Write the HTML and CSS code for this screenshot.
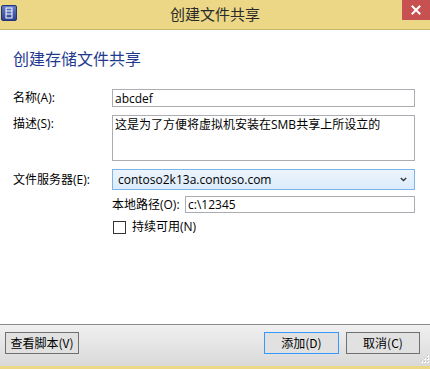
FILE: index.html
```html
<!DOCTYPE html>
<html lang="zh-CN">
<head>
<meta charset="utf-8">
<title>创建文件共享</title>
<link rel="stylesheet" href="styles.css">
</head>
<body>
<div class="window">
  <div class="titlebar">
    <div class="app-icon">
      <svg width="16" height="16" viewBox="0 0 16 16">
        <defs>
          <linearGradient id="ig" x1="0" y1="0" x2="0" y2="1">
            <stop offset="0" stop-color="#6a7fc8"/>
            <stop offset="1" stop-color="#2a3f8f"/>
          </linearGradient>
        </defs>
        <rect x="0.5" y="0.5" width="15" height="15" rx="1.5" fill="url(#ig)" stroke="#24357a"/>
        <rect x="5" y="3" width="6" height="10" fill="none" stroke="#fff" stroke-width="1"/>
        <line x1="5" y1="6" x2="11" y2="6" stroke="#fff"/>
        <line x1="5" y1="9" x2="11" y2="9" stroke="#fff"/>
      </svg>
    </div>
    <div class="title">创建文件共享</div>
    <div class="close">
      <svg width="10" height="10" viewBox="0 0 10 10">
        <path d="M1.5 1.5 L8.5 8.5 M8.5 1.5 L1.5 8.5" stroke="#fff" stroke-width="2" stroke-linecap="square"/>
      </svg>
    </div>
  </div>

  <div class="content">
    <h1 class="heading">创建存储文件共享</h1>
    <div class="form">
      <label class="label row-name">名称(A):</label>
      <input class="field input" value="abcdef">

      <label class="label row-desc">描述(S):</label>
      <div class="field textarea">这是为了方便将虚拟机安装在SMB共享上所设立的</div>

      <label class="label row-server">文件服务器(E):</label>
      <div class="field combo">
        <span>contoso2k13a.contoso.com</span>
        <svg class="chev" width="7" height="5" viewBox="0 0 7 5">
          <path d="M0.8 1 L3.5 3.6 L6.2 1" fill="none" stroke="#333" stroke-width="1.4"/>
        </svg>
      </div>

      <div class="spacer"></div>
      <div class="subrow">
        <label class="sublabel">本地路径(O):</label>
        <input class="field input path" value="c:\12345">
      </div>

      <div class="spacer"></div>
      <div class="check-row">
        <span class="checkbox"></span>
        <span class="check-label">持续可用(N)</span>
      </div>
    </div>
  </div>

  <div class="footer">
    <button class="btn">查看脚本(V)</button>
    <div class="footer-right">
      <button class="btn default">添加(D)</button>
      <button class="btn">取消(C)</button>
    </div>
    <svg class="grip" width="10" height="10" viewBox="0 0 10 10">
      <g fill="#ffffff">
        <rect x="8" y="0" width="2" height="2"/>
        <rect x="5" y="3" width="2" height="2"/><rect x="8" y="3" width="2" height="2"/>
        <rect x="2" y="6" width="2" height="2"/><rect x="5" y="6" width="2" height="2"/><rect x="8" y="6" width="2" height="2"/>
      </g>
      <g fill="#b8b8b8">
        <rect x="8" y="0" width="1" height="1"/>
        <rect x="5" y="3" width="1" height="1"/><rect x="8" y="3" width="1" height="1"/>
        <rect x="2" y="6" width="1" height="1"/><rect x="5" y="6" width="1" height="1"/><rect x="8" y="6" width="1" height="1"/>
      </g>
    </svg>
  </div>
  <div class="bottom-edge"></div>
</div>
</body>
</html>
```

FILE: styles.css
```css
* { box-sizing: border-box; }

html, body {
  margin: 0;
  padding: 0;
  background: #ffffff;
}

body {
  font-family: "Open Sans", "Noto Sans CJK SC", sans-serif;
  font-size: 12px;
  color: #000;
}

.window {
  width: 430px;
  height: 369px;
  display: flex;
  flex-direction: column;
  background: #ffffff;
}

.titlebar {
  height: 30px;
  flex: none;
  background: #ebd785;
  border-bottom: 1px solid #c8b66e;
  display: flex;
  align-items: flex-start;
  position: relative;
}

.app-icon {
  width: 16px;
  height: 16px;
  margin: 5px 0 0 1px;
  display: flex;
}

.title {
  flex: 1;
  text-align: center;
  font-size: 15px;
  line-height: 20px;
  margin-top: 4px;
  color: #2a2a2a;
  font-family: "Noto Sans CJK SC", sans-serif;
  padding-left: 11px;
}

.close {
  width: 28px;
  height: 20px;
  background: #c75050;
  display: flex;
  align-items: center;
  justify-content: center;
}

.content {
  flex: 1;
  padding: 17px 15px 0 13px;
}

.heading {
  margin: 0;
  font-family: "Noto Sans CJK SC", sans-serif;
  font-weight: normal;
  font-size: 16px;
  line-height: 22px;
  color: #1f3a8f;
}

.form {
  margin-top: 20px;
  display: grid;
  grid-template-columns: 99px 1fr;
  align-items: start;
}

.label {
  line-height: 18px;
  white-space: nowrap;
}

.field {
  font-family: "Open Sans", "Noto Sans CJK SC", sans-serif;
  font-size: 12px;
  color: #000;
  border: 1px solid #abadb3;
  background: #fff;
  margin: 0;
}

.input {
  height: 18px;
  padding: 0 2px;
  line-height: 16px;
  outline: none;
  width: 100%;
}

.row-name { margin-top: 0; }

.textarea {
  margin-top: 8px;
  height: 46px;
  padding: 0 2px;
  line-height: 17px;
}
.row-desc { margin-top: 8px; }

.combo {
  margin-top: 8px;
  height: 21px;
  border-color: #7eb4ea;
  background: linear-gradient(#ecf4fc, #dcecfc);
  display: flex;
  align-items: center;
  justify-content: space-between;
  padding: 0 7px 0 5px;
  line-height: 19px;
}
.row-server { margin-top: 9px; line-height: 20px; }

.subrow {
  margin-top: 6px;
  display: flex;
  align-items: center;
}

.sublabel {
  white-space: nowrap;
  width: 73px;
  flex: none;
  line-height: 17px;
}

.path {
  height: 17px;
  flex: 1;
}

.check-row {
  margin-top: 7px;
  display: flex;
  align-items: center;
  padding-left: 1px;
}

.checkbox {
  width: 13px;
  height: 13px;
  border: 1px solid #333;
  background: #fff;
  flex: none;
}

.check-label {
  margin-left: 6px;
  line-height: 14px;
}

.footer {
  flex: none;
  height: 42px;
  border-top: 1px solid #8a8a8a;
  background: linear-gradient(#f0f0f0, #d9d9d9);
  display: flex;
  align-items: flex-start;
  justify-content: space-between;
  padding: 7px 10px 0 5px;
  position: relative;
}

.footer-right {
  display: flex;
  gap: 7px;
}

.btn {
  width: 74px;
  height: 22px;
  margin: 0;
  padding: 0;
  font-family: "Noto Sans CJK SC", sans-serif;
  font-size: 12px;
  line-height: 18px;
  color: #000;
  background: #e1e1e1;
  border: 1px solid #707070;
  border-radius: 0;
}

.btn.default {
  width: 75px;
  border-color: #3399ff;
}

.grip {
  position: absolute;
  right: 1px;
  bottom: 1px;
}

.bottom-edge {
  flex: none;
  height: 3px;
  background: #ebd785;
}
```
